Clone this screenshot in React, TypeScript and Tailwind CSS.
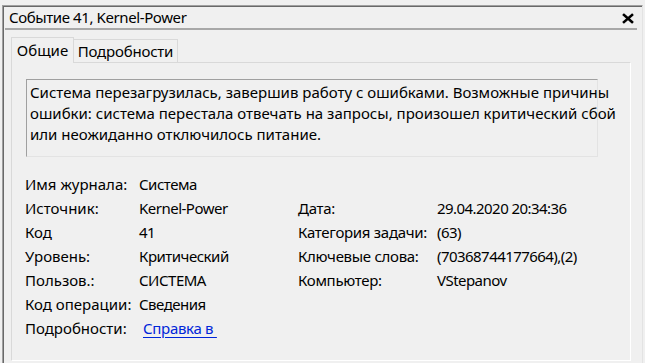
const rows: [string, string, string, string][] = [
  ["Имя журнала:", "Система", "", ""],
  ["Источник:", "Kernel-Power", "Дата:", "29.04.2020 20:34:36"],
  ["Код", "41", "Категория задачи:", "(63)"],
  ["Уровень:", "Критический", "Ключевые слова:", "(70368744177664),(2)"],
  ["Пользов.:", "СИСТЕМА", "Компьютер:", "VStepanov"],
  ["Код операции:", "Сведения", "", ""],
];

const App = () => {
  return (
    <div className="w-[645px] h-[363px] overflow-hidden bg-[#f0f0f0] pt-[5px] pl-[2px] text-[15px] text-black font-['Segoe_UI','Noto_Sans',sans-serif]">
      {/* window frame */}
      <div className="w-[641px] h-[400px] border-l border-t border-[#a0a0a0] border-r border-r-[#e3e3e3]">
        <div className="h-full border-l border-t border-[#696969]">
          {/* title */}
          <div className="flex items-center justify-between h-[21px] pl-[5px] pr-[8px]">
            <span className="leading-[21px] whitespace-nowrap tracking-[-0.4px]">Событие 41, Kernel-Power</span>
            <svg width="12" height="11" viewBox="0 0 12 11" className="mb-[-1px]">
              <path d="M2 2 L10 9 M10 2 L2 9" stroke="#000" strokeWidth="2.6" strokeLinecap="square" />
            </svg>
          </div>
          <div className="ml-[1px] w-[632px] h-[2px] bg-[#a8a8a8]" />

          {/* tabs */}
          <div className="ml-[7px] mt-[6px] flex items-end h-[26px]">
            <div className="h-[26px] w-[63px] border border-b-0 border-[#d9d9d9] bg-[#f0f0f0] flex items-center justify-center leading-none relative z-10 mb-[-1px]">
              Общие
            </div>
            <div className="h-[23px] w-[104px] border border-l-0 border-b-0 border-[#d9d9d9] bg-[#f0f0f0] flex items-center justify-center leading-none tracking-[-0.2px]">
              Подробности
            </div>
          </div>

          {/* panel */}
          <div className="ml-[7px] w-[620px] h-[299px] border border-[#d9d9d9] border-r-white border-b-white">
            <div className="ml-[14px] mt-[16px] w-[572px] h-[78px] border-l border-t border-[#a0a0a0] border-r-[#e3e3e3] border-b-[#e3e3e3] border-r border-b pl-[3px] pt-[2px] leading-[21px] whitespace-nowrap">
              <div>Система перезагрузилась, завершив работу с ошибками. Возможные причины</div>
              <div>ошибки: система перестала отвечать на запросы, произошел критический сбой</div>
              <div>или неожиданно отключилось питание.</div>
            </div>

            <div className="mt-[15px] ml-[13px] grid grid-cols-[114px_159px_139px_1fr] auto-rows-[24px] items-center whitespace-nowrap">
              {rows.map((r, i) => (
                <div key={i} className="contents">
                  <span>{r[0]}</span>
                  <span className="tracking-[-0.5px]">{r[1]}</span>
                  <span className="tracking-[-0.3px]">{r[2]}</span>
                  <span className="tracking-[-0.55px]">{r[3]}</span>
                </div>
              ))}
              <span>Подробности:</span>
              <span className="pl-[4px]">
                <a href="#" className="text-[#0026d9] underline underline-offset-[3px] tracking-[-0.3px]">Справка в&nbsp;</a>
              </span>
            </div>
          </div>
        </div>
      </div>
    </div>
  );
};

export default App;
